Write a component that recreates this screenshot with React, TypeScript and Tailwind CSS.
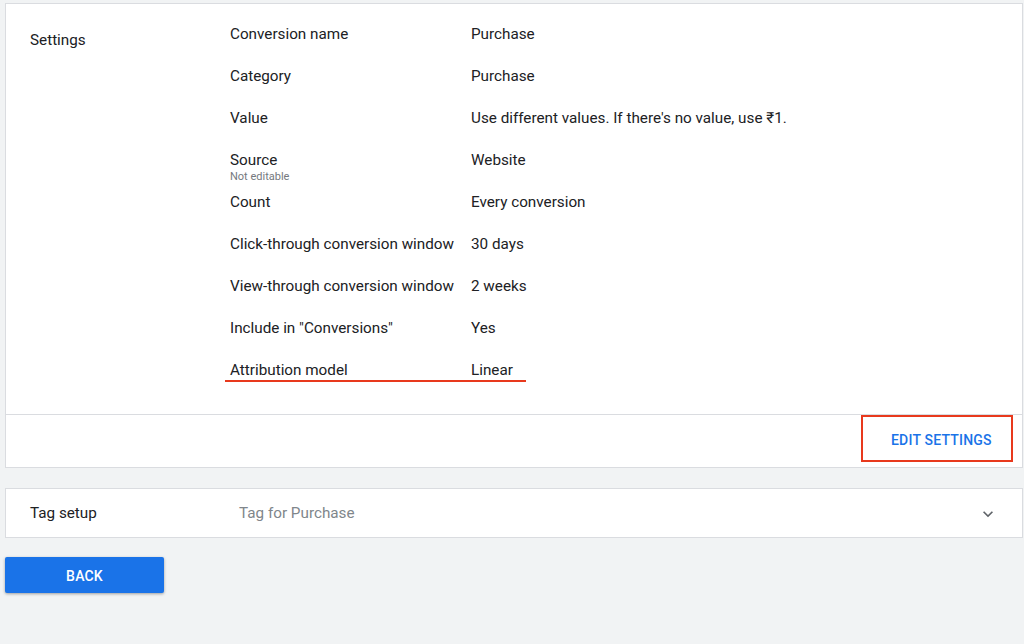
import React from "react";

const rows: { label: string; value: string; sub?: string }[] = [
  { label: "Conversion name", value: "Purchase" },
  { label: "Category", value: "Purchase" },
  { label: "Value", value: "Use different values. If there's no value, use ₹1." },
  { label: "Source", value: "Website", sub: "Not editable" },
  { label: "Count", value: "Every conversion" },
  { label: "Click-through conversion window", value: "30 days" },
  { label: "View-through conversion window", value: "2 weeks" },
  { label: "Include in \"Conversions\"", value: "Yes" },
  { label: "Attribution model", value: "Linear" },
];

export default function App() {
  return (
    <div
      className="w-[1024px] h-[644px] bg-[#f1f3f4] overflow-hidden pt-[3px] text-[#202124]"
      style={{ fontFamily: "Roboto, 'Liberation Sans', Arial, sans-serif" }}
    >
      <div className="ml-[5px] mr-[1px] bg-white border border-[#dadce0]">
        <div className="flex pt-[8px] pb-[24px]">
          <div className="w-[224px] pl-[24px] pt-[18px] text-[15.25px] leading-[20px]">Settings</div>
          <div className="flex flex-col">
            {rows.map((r, i) => (
              <div key={r.label} className="relative flex h-[42px] pt-[12px] text-[15.25px] leading-[20px]">
                <div className="w-[241px] flex flex-col">
                  <span>{r.label}</span>
                  {r.sub && <span className="text-[11px] leading-[13px] text-[#75797e]">{r.sub}</span>}
                </div>
                <div>{r.value}</div>
                {i === rows.length - 1 && (
                  <div className="absolute left-[-5px] top-[32px] w-[301px] h-[2px] bg-[#e8391d]" />
                )}
              </div>
            ))}
          </div>
        </div>
        <div className="border-t border-[#dadce0] h-[53px] flex justify-end items-start pr-[9px]">
          <div className="h-[47px] w-[152px] border-2 border-[#e8391d] flex items-center justify-start pl-[28px]">
            <span className="text-[14px] font-medium text-[#1a73e8] tracking-[0.2px] pt-[4px]">EDIT SETTINGS</span>
          </div>
        </div>
      </div>

      <div className="mt-[20px] ml-[5px] mr-[1px] bg-white border border-[#dadce0] h-[50px] flex items-center">
        <div className="w-[233px] pl-[24px] text-[15.25px] pt-[1px]">Tag setup</div>
        <div className="flex-1 text-[15.25px] text-[#80868b] pt-[1px]">Tag for Purchase</div>
        <svg width="20" height="20" viewBox="0 0 24 24" className="mr-[24px] mt-[2px] fill-[#5f6368]">
          <path d="M16.59 8.59L12 13.17 7.41 8.59 6 10l6 6 6-6z" />
        </svg>
      </div>

      <button className="mt-[19px] ml-[5px] w-[159px] h-[36px] bg-[#1a73e8] rounded-[2px] shadow-[0_1px_3px_rgba(0,0,0,0.35)] text-white text-[14px] font-medium tracking-[0.2px] flex items-center justify-center pt-[2px]">
        BACK
      </button>
    </div>
  );
}
